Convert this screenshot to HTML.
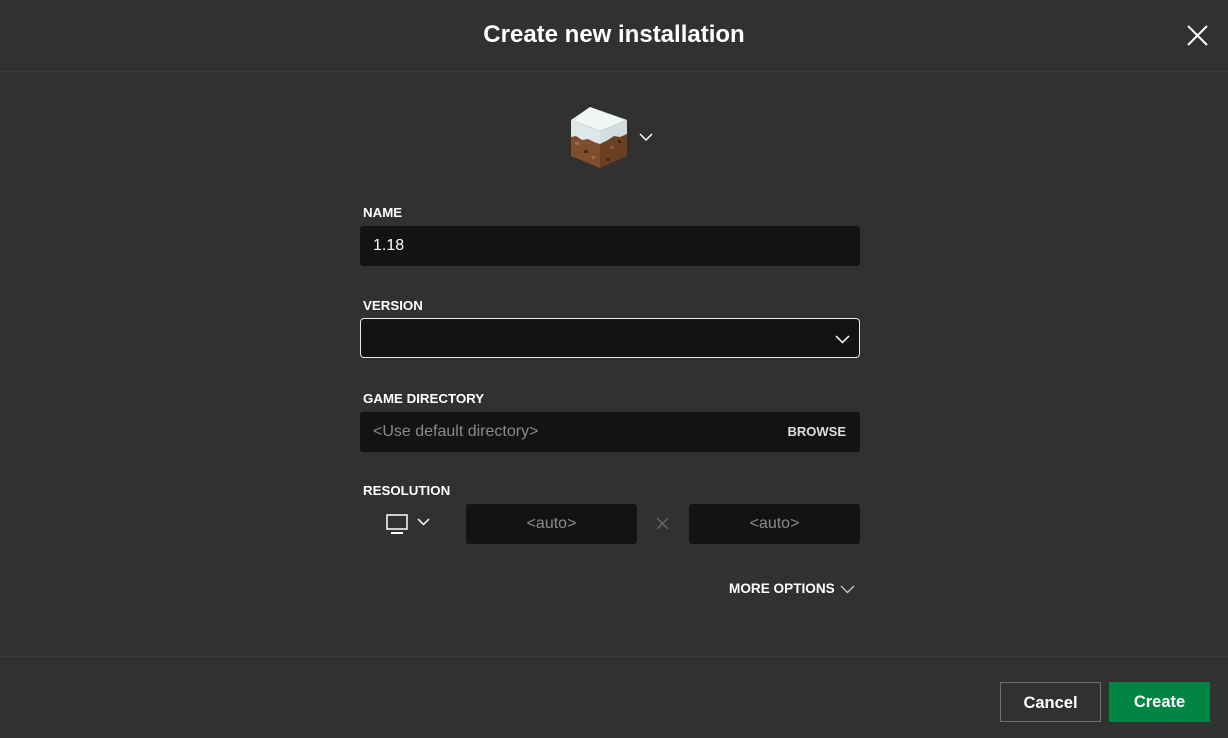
<!DOCTYPE html>
<html><head><meta charset="utf-8"><style>
*{box-sizing:border-box;margin:0;padding:0}
body{width:1228px;height:738px;background:#313131;font-family:"Liberation Sans",sans-serif;color:#fff;position:relative;overflow:hidden}
.hdr{position:absolute;left:0;top:0;width:1228px;height:72px;border-bottom:1px solid #3a3a3a;text-align:center;line-height:70px;font-size:24px;font-weight:bold}
.ftr{position:absolute;left:0;top:656px;width:1228px;border-top:1px solid #3a3a3a}
.lbl{position:absolute;left:363px;font-size:13.3px;font-weight:bold}
.inp{position:absolute;left:360px;width:500px;height:40px;background:#131313;border-radius:3px;font-size:16px;line-height:40px;padding-left:13px}
.btn{position:absolute;top:682px;height:40px;font-size:16.5px;font-weight:bold;text-align:center;line-height:40px}
</style></head><body>
<div class="hdr">Create new installation</div>
<svg style="position:absolute;left:1187px;top:25px" width="21" height="21" viewBox="0 0 21 21"><path d="M1 1L20 20M20 1L1 20" stroke="#fff" stroke-width="2"/></svg>
<svg style="position:absolute;left:570px;top:106px" width="58" height="64" viewBox="0 0 58 64">
<polygon points="20,1 57,14 30,25 1,14" fill="#f0f5f5"/>
<polygon points="1,14 30,25 30,62 1,50" fill="#7e4e2e"/>
<polygon points="30,25 57,14 57,50 30,62" fill="#6a3f22"/>
<polygon points="1,14 30,25 30,38 24,36 18,33 12,34 6,30 1,31" fill="#dfe8e8"/>
<polygon points="30,25 57,14 57,28 50,31 44,30 38,34 30,38" fill="#d2dede"/>
<rect x="5" y="36" width="4" height="3" fill="#a06a44"/><rect x="14" y="44" width="4" height="3" fill="#4a2a18"/><rect x="22" y="50" width="3" height="3" fill="#a06a44"/><rect x="40" y="40" width="4" height="3" fill="#8a5534"/><rect x="48" y="34" width="3" height="3" fill="#3e2414"/><rect x="36" y="52" width="4" height="3" fill="#4a2a18"/>
</svg>
<svg style="position:absolute;left:639px;top:133px" width="14" height="9" viewBox="0 0 14 9"><path d="M1 1L7 7L13 1" stroke="#fff" stroke-width="1.5" fill="none"/></svg>
<div class="lbl" style="top:205px">NAME</div>
<div class="inp" style="top:226px">1.18</div>
<div class="lbl" style="top:298px">VERSION</div>
<div class="inp" style="top:318px;border:1px solid #e8e8e8;border-radius:4px"></div>
<svg style="position:absolute;left:835px;top:335px" width="15" height="9" viewBox="0 0 15 9"><path d="M1 1L7.5 7.5L14 1" stroke="#fff" stroke-width="1.5" fill="none"/></svg>
<div class="lbl" style="top:391px">GAME DIRECTORY</div>
<div class="inp" style="top:412px;color:#8a8a8a">&lt;Use default directory&gt;<span style="position:absolute;right:14px;color:#ddd;font-size:13px;font-weight:bold">BROWSE</span></div>
<div class="lbl" style="top:483px">RESOLUTION</div>
<svg style="position:absolute;left:386px;top:514px" width="46" height="21" viewBox="0 0 46 21"><rect x="1" y="1" width="20" height="14" fill="none" stroke="#fff" stroke-width="1.5"/><rect x="5" y="18" width="12" height="2" fill="#fff"/><path d="M32 5L37.5 10.5L43 5" stroke="#fff" stroke-width="1.5" fill="none"/></svg>
<div class="inp" style="top:504px;left:466px;width:171px;text-align:center;padding:0;color:#8a8a8a">&lt;auto&gt;</div>
<svg style="position:absolute;left:656px;top:517px" width="13" height="13" viewBox="0 0 13 13"><path d="M1 1L12 12M12 1L1 12" stroke="#666" stroke-width="1.5"/></svg>
<div class="inp" style="top:504px;left:689px;width:171px;text-align:center;padding:0;color:#8a8a8a">&lt;auto&gt;</div>
<div style="position:absolute;left:729px;top:581px;font-size:13.6px;font-weight:bold">MORE OPTIONS</div>
<svg style="position:absolute;left:840px;top:585px" width="15" height="9" viewBox="0 0 15 9"><path d="M1 1L7.5 7.5L14 1" stroke="#ccc" stroke-width="1.3" fill="none"/></svg>
<div class="ftr"></div>
<div class="btn" style="left:1000px;width:101px;border:1px solid #6f6f6f">Cancel</div>
<div class="btn" style="left:1109px;width:101px;background:#008542">Create</div>
</body></html>
